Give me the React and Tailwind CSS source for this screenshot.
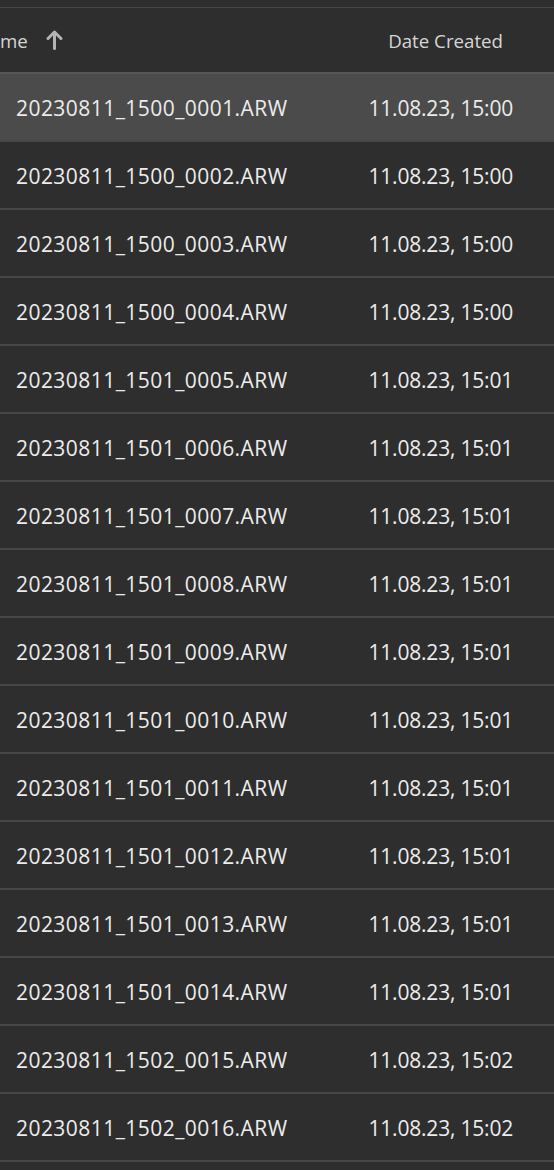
import React from "react";

const rows = [
  ["20230811_1500_0001.ARW", "11.08.23, 15:00"],
  ["20230811_1500_0002.ARW", "11.08.23, 15:00"],
  ["20230811_1500_0003.ARW", "11.08.23, 15:00"],
  ["20230811_1500_0004.ARW", "11.08.23, 15:00"],
  ["20230811_1501_0005.ARW", "11.08.23, 15:01"],
  ["20230811_1501_0006.ARW", "11.08.23, 15:01"],
  ["20230811_1501_0007.ARW", "11.08.23, 15:01"],
  ["20230811_1501_0008.ARW", "11.08.23, 15:01"],
  ["20230811_1501_0009.ARW", "11.08.23, 15:01"],
  ["20230811_1501_0010.ARW", "11.08.23, 15:01"],
  ["20230811_1501_0011.ARW", "11.08.23, 15:01"],
  ["20230811_1501_0012.ARW", "11.08.23, 15:01"],
  ["20230811_1501_0013.ARW", "11.08.23, 15:01"],
  ["20230811_1501_0014.ARW", "11.08.23, 15:01"],
  ["20230811_1502_0015.ARW", "11.08.23, 15:02"],
  ["20230811_1502_0016.ARW", "11.08.23, 15:02"],
];

export default function App() {
  return (
    <div
      className="min-h-screen w-full overflow-hidden bg-[#2e2e2e] pt-[7px]"
      style={{ fontFamily: '"Open Sans", "Noto Sans", sans-serif' }}
    >
      <div className="border-t border-[#464646]">
        <div className="flex h-[64px] items-center pt-[2px] text-[18.7px] text-[#d6d6d6]">
          <div className="flex flex-1 items-center">
            <span>me</span>
            <svg
              className="ml-[18px] -mt-[2px]"
              width="17"
              height="20"
              viewBox="0 0 17 20"
              fill="none"
              stroke="#b4b4b4"
              strokeWidth="3"
              strokeLinecap="round"
              strokeLinejoin="round"
            >
              <path d="M8.5 18.5V2.5" />
              <path d="M2 8.5L8.5 2L15 8.5" />
            </svg>
          </div>
          <div className="pr-[51px] text-right">Date Created</div>
        </div>
        <div className="border-b-2 border-[#474747]">
          {rows.map(([name, date], i) => (
            <div
              key={name}
              className={
                i === 0
                  ? "flex h-[68px] items-center border-t-2 border-[#565656] bg-[#4b4b4b] pt-[4px] text-[21px] text-[#ececec]"
                  : "flex h-[68px] items-center border-t-2 border-[#474747] pt-[4px] text-[21px] text-[#ececec]"
              }
            >
              <div className="flex-1 pl-[16px] tracking-[0.45px]">{name}</div>
              <div className="pr-[41px] text-right tracking-[-0.2px]">{date}</div>
            </div>
          ))}
        </div>
      </div>
    </div>
  );
}
